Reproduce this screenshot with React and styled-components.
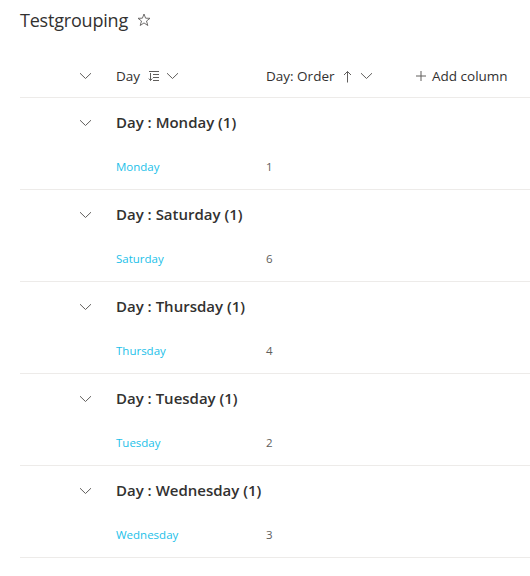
import React from 'react'
import styled, { createGlobalStyle } from 'styled-components'

const TEXT = '#323130'
const ICON = '#605e5c'
const LINK = '#1cbfe9'
const LINE = '#edebe9'

const groups = [
	{ day: 'Monday', order: 1 },
	{ day: 'Saturday', order: 6 },
	{ day: 'Thursday', order: 4 },
	{ day: 'Tuesday', order: 2 },
	{ day: 'Wednesday', order: 3 },
]

const GlobalStyle = createGlobalStyle`
	body {
		margin: 0;
		background: #fff;
		font-family: "Open Sans", "Noto Sans", sans-serif;
		color: ${TEXT};
	}
	* {
		box-sizing: border-box;
	}
`

const Page = styled.div`
	padding-left: 20px;
	width: 530px;
`

const TitleBar = styled.div`
	height: 55px;
	display: flex;
	align-items: flex-start;
	padding-top: 7px;
	gap: 9px;
`

const Title = styled.h1`
	margin: 0;
	font-size: 18px;
	font-weight: 400;
	line-height: 26px;
	letter-spacing: -0.2px;
	color: ${TEXT};
`

const StarButton = styled.span`
	display: flex;
	align-items: center;
	height: 26px;
	color: ${ICON};
`

const Row = styled.div`
	display: grid;
	grid-template-columns: 96px 150px 150px 1fr;
	align-items: center;
	height: ${p => p.h}px;
	border-bottom: ${p => (p.divider ? `1px solid ${LINE}` : 'none')};
`

const ChevronCell = styled.div`
	display: flex;
	justify-content: flex-end;
	padding-right: 24px;
	color: ${ICON};
`

const HeaderCell = styled.div`
	display: flex;
	align-items: center;
	font-size: 13.5px;
	color: ${TEXT};
	gap: 6px;
`

const HeaderIcon = styled.span`
	display: flex;
	align-items: center;
	color: ${ICON};
	margin-left: ${p => p.ml || 0}px;
`

const GroupTitle = styled.div`
	grid-column: 2 / span 3;
	font-size: 15px;
	font-weight: 600;
	color: ${TEXT};
	padding-bottom: 1px;
`

const LinkCell = styled.div`
	font-size: 11.5px;
	color: ${LINK};
	padding-bottom: 3px;
`

const NumberCell = styled.div`
	font-size: 11.5px;
	color: ${ICON};
	padding-bottom: 3px;
`

const Chevron = () => (
	<svg width="13" height="8" viewBox="0 0 13 8" fill="none">
		<path d="M1 1.2 L6.5 6.5 L12 1.2" stroke="currentColor" strokeWidth="1" />
	</svg>
)

const Star = () => (
	<svg width="14" height="14" viewBox="0 0 14 14" fill="none">
		<path
			d="M7 1 L8.6 5.2 L13 5.3 L9.5 8 L10.8 12.5 L7 9.9 L3.2 12.5 L4.5 8 L1 5.3 L5.4 5.2 Z"
			stroke="currentColor"
			strokeWidth="0.9"
			strokeLinejoin="round"
		/>
	</svg>
)

const GroupIcon = () => (
	<svg width="12" height="12" viewBox="0 0 12 12" fill="none" stroke="currentColor" strokeWidth="1">
		<path d="M1 1.5 H11" />
		<path d="M5 4.5 H11 M5 7.5 H11 M5 10.5 H11" />
		<path d="M2.5 3 V10.5 M0.8 8.6 L2.5 10.5 L4.2 8.6" />
	</svg>
)

const ArrowUp = () => (
	<svg width="9" height="13" viewBox="0 0 9 13" fill="none" stroke="currentColor" strokeWidth="1">
		<path d="M4.5 1.5 V12.5 M1 5 L4.5 1.5 L8 5" />
	</svg>
)

const Plus = () => (
	<svg width="10" height="10" viewBox="0 0 10 10" fill="none" stroke="currentColor" strokeWidth="1">
		<path d="M5 0 V10 M0 5 H10" />
	</svg>
)

const Group = ({ day, order }) => (
	<>
		<Row h={49}>
			<ChevronCell>
				<Chevron />
			</ChevronCell>
			<GroupTitle>Day : {day} (1)</GroupTitle>
		</Row>
		<Row h={43} divider>
			<div />
			<LinkCell>{day}</LinkCell>
			<NumberCell>{order}</NumberCell>
		</Row>
	</>
)

export default function App() {
	return (
		<Page>
			<GlobalStyle />
			<TitleBar>
				<Title>Testgrouping</Title>
				<StarButton>
					<Star />
				</StarButton>
			</TitleBar>
			<Row h={43} divider>
				<ChevronCell>
					<Chevron />
				</ChevronCell>
				<HeaderCell>
					Day
					<HeaderIcon ml={2}>
						<GroupIcon />
					</HeaderIcon>
					<HeaderIcon>
						<Chevron />
					</HeaderIcon>
				</HeaderCell>
				<HeaderCell>
					Day: Order
					<HeaderIcon ml={2}>
						<ArrowUp />
					</HeaderIcon>
					<HeaderIcon ml={2}>
						<Chevron />
					</HeaderIcon>
				</HeaderCell>
				<HeaderCell>
					<HeaderIcon>
						<Plus />
					</HeaderIcon>
					Add column
				</HeaderCell>
			</Row>
			{groups.map(g => (
				<Group key={g.day} {...g} />
			))}
		</Page>
	)
}
